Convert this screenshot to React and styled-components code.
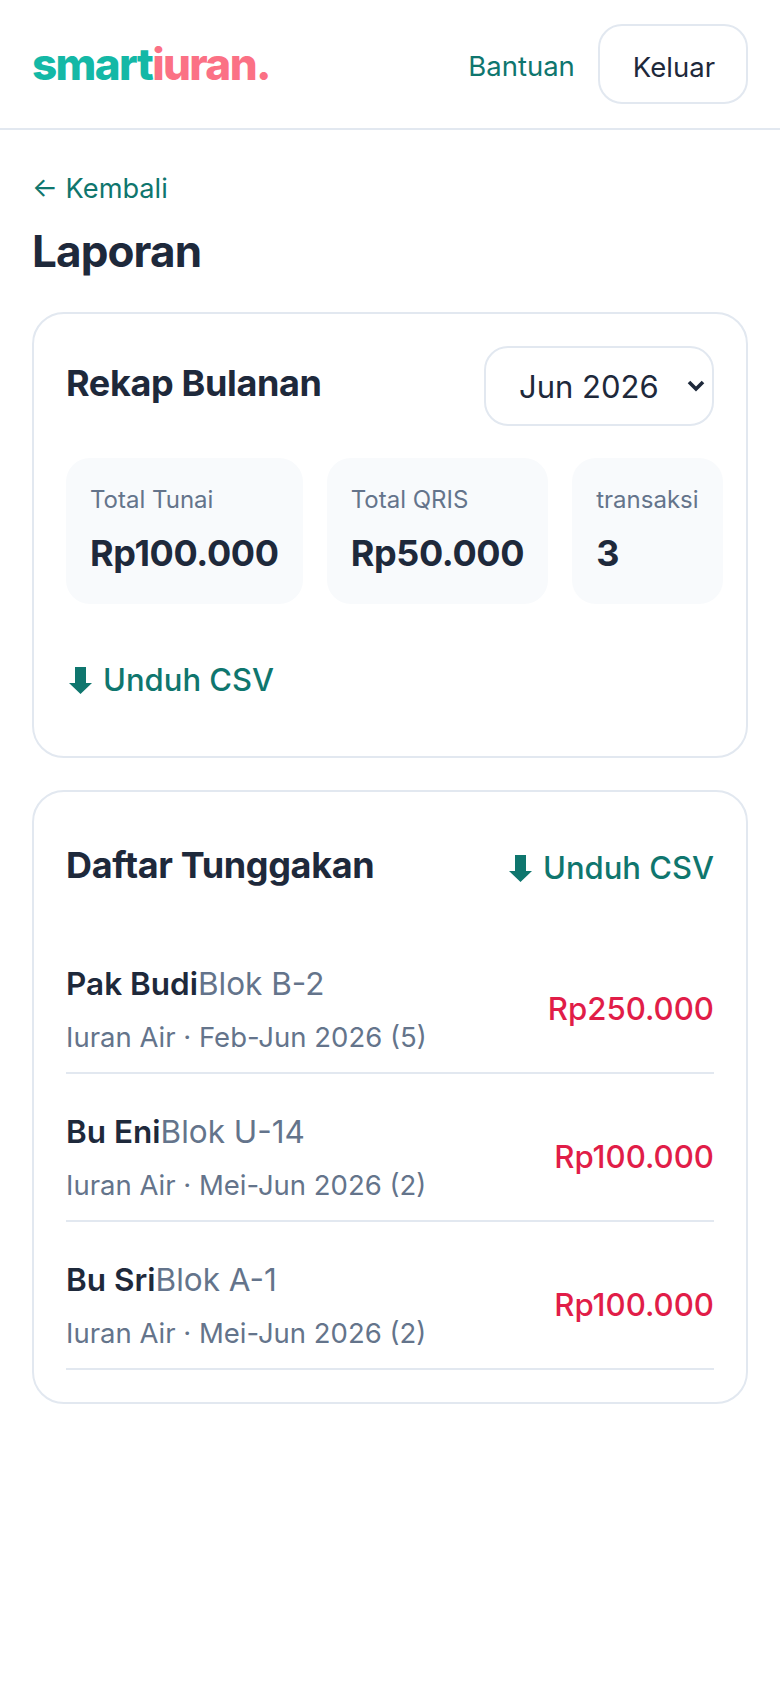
import React from "react";
import styled, { createGlobalStyle } from "styled-components";

const GlobalStyle = createGlobalStyle`
  * { box-sizing: border-box; }
  body {
    margin: 0;
    background: #fff;
    color: #1e293b;
    font-family: Inter, "Noto Sans", sans-serif;
    line-height: 1.5;
  }
`;

const Header = styled.header`
  display: flex;
  align-items: center;
  justify-content: space-between;
  padding: 24px 32px;
  border-bottom: 2px solid #e2e8f0;
`;

const Logo = styled.div`
  font-size: 44px;
  font-weight: 800;
  letter-spacing: -1.6px;
  color: #14b8a6;
  span { color: #fb7185; }
`;

const Nav = styled.nav`
  display: flex;
  align-items: center;
  gap: 23px;
`;

const NavLink = styled.a`
  padding-top: 6px;
  font-size: 27.5px;
  color: #0f766e;
`;

const OutlineButton = styled.button`
  height: 80px;
  padding: 6px 31px 0 33px;
  border: 2px solid #e2e8f0;
  border-radius: 24px;
  background: #fff;
  color: #1e293b;
  font-family: inherit;
  font-size: 27.5px;
`;

const Main = styled.main`
  padding: 32px;
`;

const BackLink = styled.a`
  display: block;
  font-size: 27.2px;
  line-height: 53px;
  color: #0f766e;
`;

const Title = styled.h1`
  margin: 3px 0 28px;
  font-size: 44px;
  font-weight: 700;
  letter-spacing: -0.02em;
`;

const Card = styled.section`
  margin-bottom: 32px;
  padding: 32px;
  border: 2px solid #e2e8f0;
  border-radius: 32px;
`;

const CardHead = styled.div`
  display: flex;
  align-items: center;
  justify-content: space-between;
`;

const CardTitle = styled.h2`
  margin: 0 0 6px;
  font-size: 36px;
  font-weight: 700;
  letter-spacing: -0.01em;
`;

const SelectWrap = styled.div`
  position: relative;
  width: 230px;
  height: 80px;
  svg {
    position: absolute;
    top: 34px;
    right: 9px;
    width: 18px;
    height: 12px;
    fill: none;
    stroke: #1e293b;
    stroke-width: 3.6;
    pointer-events: none;
  }
`;

const MonthSelect = styled.select`
  appearance: none;
  width: 100%;
  height: 100%;
  padding: 0 30px 0 33px;
  border: 2px solid #e2e8f0;
  border-radius: 24px;
  background: #fff;
  color: #1e293b;
  font-family: inherit;
  font-size: 31px;
`;

const Stats = styled.div`
  display: flex;
  gap: 24px;
  margin-top: 32px;
`;

const Stat = styled.div`
  flex: 0 0 auto;
  padding: 24px;
  border-radius: 24px;
  background: #f8fafc;
`;

const StatLabel = styled.div`
  font-size: 24px;
  color: #64748b;
`;

const StatValue = styled.div`
  margin-top: 8px;
  font-size: 36px;
  font-weight: 700;
  letter-spacing: -0.01em;
`;

const CsvLink = styled.a`
  display: inline-flex;
  align-items: center;
  gap: 11px;
  height: 88px;
  font-size: 31px;
  font-weight: 500;
  color: #0f766e;
  svg {
    width: 23px;
    height: 27px;
    margin-left: 3px;
    fill: currentColor;
  }
`;

const CsvRow = styled.div`
  display: flex;
  margin-top: 32px;
`;

const List = styled.div`
  margin-top: 14px;
`;

const Row = styled.div`
  display: flex;
  align-items: center;
  justify-content: space-between;
  padding: 34px 0 14px;
  border-bottom: 2px solid #e2e8f0;
`;

const Name = styled.div`
  font-size: 31.5px;
  line-height: 48px;
  color: #64748b;
  strong { font-weight: 600; color: #1e293b; }
`;

const Meta = styled.div`
  margin-top: 8px;
  font-size: 27.5px;
  line-height: 42px;
  color: #64748b;
`;

const Amount = styled.div`
  font-size: 31.2px;
  font-weight: 500;
  color: #e11d48;
`;

const DownloadIcon = () => (
  <svg viewBox="0 0 23 27" aria-hidden="true">
    <path d="M6 0h11v16h6L11.5 27 0 16h6z" />
  </svg>
);

const arrears = [
  { name: "Pak Budi", block: "Blok B-2", meta: "Iuran Air · Feb-Jun 2026 (5)", amount: "Rp250.000" },
  { name: "Bu Eni", block: "Blok U-14", meta: "Iuran Air · Mei-Jun 2026 (2)", amount: "Rp100.000" },
  { name: "Bu Sri", block: "Blok A-1", meta: "Iuran Air · Mei-Jun 2026 (2)", amount: "Rp100.000" },
];

export default function App() {
  return (
    <>
      <GlobalStyle />
      <Header>
        <Logo>smart<span>iuran.</span></Logo>
        <Nav>
          <NavLink>Bantuan</NavLink>
          <OutlineButton>Keluar</OutlineButton>
        </Nav>
      </Header>
      <Main>
        <BackLink>← Kembali</BackLink>
        <Title>Laporan</Title>
        <Card>
          <CardHead>
            <CardTitle>Rekap Bulanan</CardTitle>
            <SelectWrap>
              <MonthSelect defaultValue="2026-06">
                <option value="2026-06">Jun 2026</option>
              </MonthSelect>
              <svg viewBox="0 0 18 12" aria-hidden="true">
                <path d="M2 2l7 7 7-7" />
              </svg>
            </SelectWrap>
          </CardHead>
          <Stats>
            <Stat>
              <StatLabel>Total Tunai</StatLabel>
              <StatValue>Rp100.000</StatValue>
            </Stat>
            <Stat>
              <StatLabel>Total QRIS</StatLabel>
              <StatValue>Rp50.000</StatValue>
            </Stat>
            <Stat>
              <StatLabel>transaksi</StatLabel>
              <StatValue>3</StatValue>
            </Stat>
          </Stats>
          <CsvRow>
            <CsvLink><DownloadIcon />Unduh CSV</CsvLink>
          </CsvRow>
        </Card>
        <Card>
          <CardHead>
            <CardTitle>Daftar Tunggakan</CardTitle>
            <CsvLink><DownloadIcon />Unduh CSV</CsvLink>
          </CardHead>
          <List>
            {arrears.map((item) => (
              <Row key={item.name}>
                <div>
                  <Name><strong>{item.name}</strong>{item.block}</Name>
                  <Meta>{item.meta}</Meta>
                </div>
                <Amount>{item.amount}</Amount>
              </Row>
            ))}
          </List>
        </Card>
      </Main>
    </>
  );
}
